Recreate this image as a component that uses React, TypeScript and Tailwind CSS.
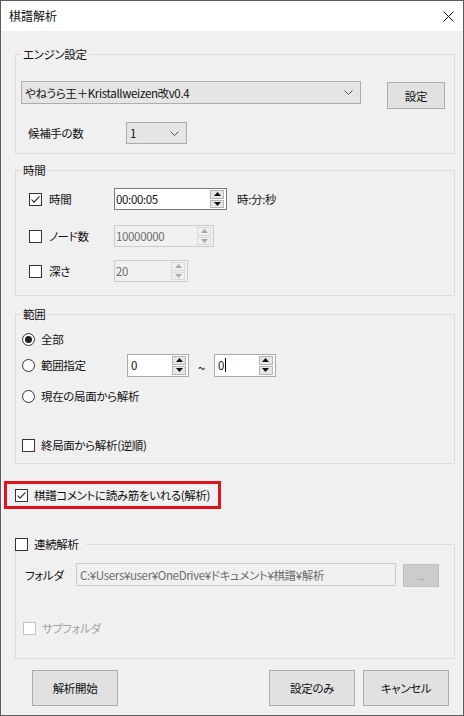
import React from "react";

const FONT =
  "font-['Noto_Sans_CJK_JP',sans-serif] [font-feature-settings:'palt'] text-[11.5px] leading-[14px] tracking-[-0.35px] text-[#111] whitespace-nowrap";

function Checkbox({ checked = false, disabled = false }: { checked?: boolean; disabled?: boolean }) {
  return (
    <span
      className={`flex h-[13px] w-[13px] shrink-0 items-center justify-center border bg-white ${
        disabled ? "border-[#c2c2c2]" : "border-[#333333]"
      }`}
    >
      {checked && (
        <svg width="11" height="11" viewBox="0 0 11 11">
          <polyline points="1.5,5.5 4,8.2 9.5,2.3" fill="none" stroke="#222" strokeWidth="1.1" />
        </svg>
      )}
    </span>
  );
}

function Radio({ checked = false }: { checked?: boolean }) {
  return (
    <span className="flex h-[13px] w-[13px] shrink-0 items-center justify-center rounded-full border border-[#333333] bg-white">
      {checked && <span className="h-[7px] w-[7px] rounded-full bg-[#222]" />}
    </span>
  );
}

function Chevron() {
  return (
    <svg width="9" height="5" viewBox="0 0 9 5">
      <polyline points="0.5,0.5 4.5,4.5 8.5,0.5" fill="none" stroke="#555" strokeWidth="1" />
    </svg>
  );
}

function Combo({ text, className }: { text: string; className: string }) {
  return (
    <div className={`flex items-center justify-between border border-[#adadad] bg-[#e5e5e5] pl-[3px] pr-[7px] ${className}`}>
      <span>{text}</span>
      <Chevron />
    </div>
  );
}

function Arrow({ up, color }: { up: boolean; color: string }) {
  return (
    <svg width="7" height="4" viewBox="0 0 7 4">
      <polygon points={up ? "0,4 3.5,0 7,4" : "0,0 3.5,4 7,0"} fill={color} />
    </svg>
  );
}

function SpinBox({
  value,
  className,
  disabled = false,
  dark = false,
  cursor = false,
}: {
  value: string;
  className: string;
  disabled?: boolean;
  dark?: boolean;
  cursor?: boolean;
}) {
  const border = disabled ? "border-[#cccccc]" : dark ? "border-[#7a7a7a]" : "border-[#a9a9a9]";
  const btn = disabled ? "bg-[#f0f0f0] border-[#dadada]" : "bg-[#e6e6e6] border-[#b5b5b5]";
  const arrow = disabled ? "#a8a8a8" : "#111";
  return (
    <div className={`flex items-stretch border ${border} ${disabled ? "bg-[#f0f0f0] text-[#6d6d6d]" : "bg-white"} ${className}`}>
      <div className="flex flex-1 items-center pl-[1px]">
        <span>{value}</span>
        {cursor && <span className="ml-[1px] h-[14px] w-px bg-black" />}
      </div>
      <div className="flex w-[16px] flex-col gap-px py-[1px] pr-[2px]">
        <div className={`flex flex-1 items-center justify-center border ${btn}`}>
          <Arrow up color={arrow} />
        </div>
        <div className={`flex flex-1 items-center justify-center border ${btn}`}>
          <Arrow up={false} color={arrow} />
        </div>
      </div>
    </div>
  );
}

function Button({ label, className }: { label: string; className: string }) {
  return (
    <div className={`flex items-center justify-center border border-[#adadad] bg-[#e1e1e1] ${className}`}>
      {label}
    </div>
  );
}

export default function App() {
  return (
    <div className={`flex h-[716px] w-[464px] flex-col border border-[#5c5c5c] bg-[#f0f0f0] ${FONT}`}>
      {/* title bar */}
      <div className="flex h-[30px] shrink-0 items-center justify-between bg-white pl-[8px] pr-[9px]">
        <span className="text-[12px] tracking-normal [font-feature-settings:normal]">棋譜解析</span>
        <svg width="11" height="11" viewBox="0 0 11 11">
          <path d="M0.5 0.5 L10.5 10.5 M10.5 0.5 L0.5 10.5" stroke="#111" strokeWidth="1" />
        </svg>
      </div>

      {/* エンジン設定 */}
      <fieldset className="ml-[14px] mt-[16px] w-[440px] border border-[#dcdcdc] p-0">
        <legend className="ml-[5px] px-[2px]">エンジン設定</legend>
        <div className="pb-[9px] pl-[5px] pt-[20px]">
          <div className="flex items-start">
            <Combo text="やねうら王＋Kristallweizen改v0.4" className="h-[23px] w-[340px]" />
            <Button label="設定" className="ml-[26px] mt-[1px] h-[27px] w-[58px]" />
          </div>
          <div className="mt-[13px] flex items-center">
            <span className="ml-[7px] w-[98px]">候補手の数</span>
            <Combo text="1" className="h-[22px] w-[61px]" />
          </div>
        </div>
      </fieldset>

      {/* 時間 */}
      <fieldset className="ml-[14px] mt-[9px] w-[440px] border border-[#dcdcdc] p-0">
        <legend className="ml-[5px] px-[2px]">時間</legend>
        <div className="pb-[13px] pl-[13px] pt-[11px]">
          <div className="flex h-[22px] items-center">
            <div className="flex w-[85px] items-center gap-[7px]">
              <Checkbox checked />
              <span>時間</span>
            </div>
            <SpinBox value="00:00:05" dark className="h-[22px] w-[113px]" />
            <span className="ml-[10px]">時:分:秒</span>
          </div>
          <div className="mt-[15px] flex h-[22px] items-center">
            <div className="flex w-[85px] items-center gap-[7px]">
              <Checkbox />
              <span>ノード数</span>
            </div>
            <SpinBox value="10000000" disabled className="h-[22px] w-[100px]" />
          </div>
          <div className="mt-[13px] flex h-[22px] items-center">
            <div className="flex w-[85px] items-center gap-[7px]">
              <Checkbox />
              <span>深さ</span>
            </div>
            <SpinBox value="20" disabled className="h-[22px] w-[74px]" />
          </div>
        </div>
      </fieldset>

      {/* 範囲 */}
      <fieldset className="ml-[14px] mt-[11px] w-[440px] border border-[#dcdcdc] p-0">
        <legend className="ml-[5px] px-[2px]">範囲</legend>
        <div className="pb-[7px] pl-[6px] pt-[7px]">
          <div className="flex h-[22px] items-center gap-[6px]">
            <Radio checked />
            <span>全部</span>
          </div>
          <div className="mt-[4px] flex h-[22px] items-center">
            <div className="flex w-[105px] items-center gap-[6px]">
              <Radio />
              <span>範囲指定</span>
            </div>
            <SpinBox value="0" className="h-[23px] w-[62px] pl-[2px]" />
            <span className="ml-[9px] mr-[9px] mt-[6px] text-[13px]">~</span>
            <SpinBox value="0" cursor className="h-[23px] w-[62px] pl-[2px]" />
          </div>
          <div className="mt-[9px] flex h-[22px] items-center gap-[6px]">
            <Radio />
            <span>現在の局面から解析</span>
          </div>
          <div className="mt-[27px] flex h-[22px] items-center gap-[6px]">
            <Checkbox />
            <span>終局面から解析(逆順)</span>
          </div>
        </div>
      </fieldset>

      {/* highlighted option */}
      <div className="ml-[3px] mt-[17px] flex h-[28px] w-[217px] items-center gap-[6px] border-[3px] border-[#e0121c] pl-[8px]">
        <Checkbox checked />
        <span>棋譜コメントに読み筋をいれる(解析)</span>
      </div>

      {/* 連続解析 */}
      <fieldset className="ml-[14px] mt-[28px] w-[440px] border border-[#dcdcdc] p-0">
        <legend className="-ml-px flex items-center gap-[6px] pr-[7px]">
          <Checkbox />
          <span>連続解析</span>
        </legend>
        <div className="pb-[19px] pt-[12px]">
          <div className="flex items-start">
            <span className="ml-[9px] w-[51px] self-center">フォルダ</span>
            <div className="flex h-[23px] w-[320px] items-center border border-[#cccccc] bg-[#f0f0f0] pl-[3px] text-[#6d6d6d]">
              C:¥Users¥user¥OneDrive¥ドキュメント¥棋譜¥解析
            </div>
            <div className="ml-[7px] mt-[1px] flex h-[23px] w-[36px] items-center justify-center border border-[#bfbfbf] bg-[#cccccc] text-[10px] text-[#8a8a8a]">
              ...
            </div>
          </div>
          <div className="ml-[7px] mt-[30px] flex h-[22px] items-center gap-[6px]">
            <Checkbox disabled />
            <span className="text-[#a0a0a0]">サブフォルダ</span>
          </div>
        </div>
      </fieldset>

      {/* buttons */}
      <div className="ml-[31px] mr-[14px] mt-[11px] flex items-center">
        <Button label="解析開始" className="h-[36px] w-[86px]" />
        <div className="flex-1" />
        <Button label="設定のみ" className="h-[36px] w-[86px]" />
        <Button label="キャンセル" className="ml-[8px] h-[36px] w-[86px]" />
      </div>
    </div>
  );
}
